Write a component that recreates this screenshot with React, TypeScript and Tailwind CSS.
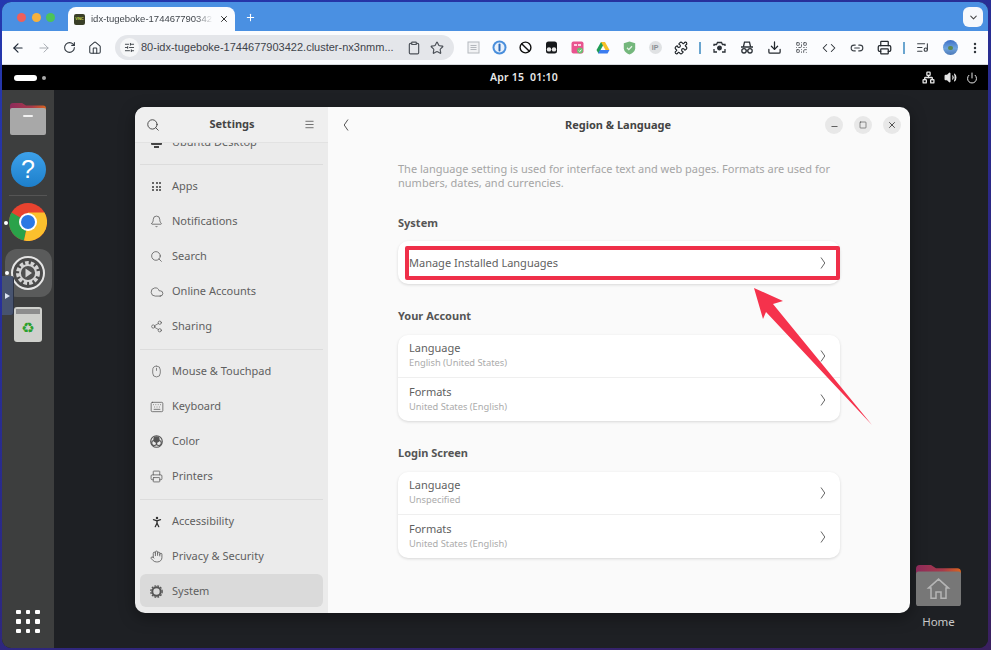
import React from "react";
import {
  ArrowLeft, ArrowRight, RotateCw, Home, Star, Clipboard, Ban, Puzzle, Download, QrCode, Code, Link2, Printer, ListMusic,
  EllipsisVertical, ChevronDown, X, Plus, Search, Menu, Bell, Cloud, Share2, Mouse, Keyboard, PersonStanding, Hand, Minus, Square, Volume2, Power, Network, SlidersHorizontal,
} from "lucide-react";

const FONT = "font-['Noto_Sans','Open_Sans',sans-serif]";

function Cell({ children, w = "w-[26px]" }: { children: React.ReactNode; w?: string }) {
  return <div className={`${w} h-full flex items-center justify-center shrink-0`}>{children}</div>;
}

const W2 = "w-[27.5px]";

function Toolbar() {
  return (
    <div className="h-[34px] bg-[#fbfcfe] flex items-center shrink-0 pl-[3px] border-b border-[#d5d8dc]">
      <div className="w-[26px] flex justify-center"><ArrowLeft size={14} strokeWidth={2} className="text-[#1f2937]" /></div>
      <div className="w-[25px] flex justify-center"><ArrowRight size={14} strokeWidth={1.6} className="text-[#a3a8ae]" /></div>
      <div className="w-[26px] flex justify-center"><RotateCw size={13} strokeWidth={2} className="text-[#333a42]" /></div>
      <div className="w-[26px] flex justify-center"><Home size={14} strokeWidth={1.8} className="text-[#333a42]" /></div>
      <div className="ml-[7px] w-[339px] h-[25px] rounded-full bg-[#e4e6ea] flex items-center pl-[5px] pr-[10px]">
        <div className="w-[19px] h-[19px] rounded-full bg-[#f6f7f8] flex items-center justify-center shrink-0">
          <SlidersHorizontal size={11} className="text-[#3a3f45]" />
        </div>
        <span className="ml-[2px] text-[11px] text-[#3f444a] whitespace-nowrap font-['Liberation_Sans',sans-serif] flex-1">80-idx-tugeboke-1744677903422.cluster-nx3nmm...</span>
        <Clipboard size={14} className="text-[#4c5158] mr-[9px]" />
        <Star size={14} className="text-[#4c5158]" />
      </div>
      <div className="ml-[6px] flex h-full items-center">
        <Cell>
          <svg width="13" height="13" viewBox="0 0 13 13"><rect x="1" y="1" width="11" height="11" fill="#f1f2f4" stroke="#b4b8bd" /><path d="M3.5 4.5h6M3.5 6.5h6M3.5 8.5h6" stroke="#b4b8bd" /></svg>
        </Cell>
        <Cell>
          <svg width="15" height="15" viewBox="0 0 15 15"><circle cx="7.5" cy="7.5" r="7" fill="#4a8fdc" /><circle cx="7.5" cy="7.5" r="5" fill="#e9f1fb" /><rect x="6.5" y="3.5" width="2" height="8" rx="1" fill="#2d6bb8" /></svg>
        </Cell>
        <Cell><Ban size={13} strokeWidth={2.6} className="text-[#111]" /></Cell>
        <Cell>
          <svg width="13" height="13" viewBox="0 0 13 13"><path d="M1 3a2.5 2.5 0 0 1 2.5-2.5h6A2.5 2.5 0 0 1 12 3v7a2.5 2.5 0 0 1-2.5 2.5h-6A2.5 2.5 0 0 1 1 10z" fill="#16181b" /><circle cx="4" cy="8.4" r="2.2" fill="#e9e9e9" /><circle cx="9" cy="8.4" r="2.2" fill="#e9e9e9" /></svg>
        </Cell>
        <Cell>
          <svg width="13" height="13" viewBox="0 0 13 13"><rect width="12" height="12" x=".5" y=".5" rx="2" fill="#e9538f" /><rect x="3" y="3" width="3" height="2" fill="#fbd3e3" /><rect x="7" y="3" width="3" height="2" fill="#fbd3e3" /><circle cx="9" cy="9.5" r="3" fill="#6cc070" /><path d="M7.8 9.5l1 1 1.5-1.8" stroke="#fff" fill="none" /></svg>
        </Cell>
        <Cell>
          <svg width="14" height="13" viewBox="0 0 14 13"><path d="M5 1h4l-4.5 8L2.5 12.5.5 9z" fill="#1f9d55" /><path d="M9 1l4.5 8h-4L5 1z" fill="#f6bf26" /><path d="M4 9h9.5l-2 3.5H2z" fill="#3b7cf0" /></svg>
        </Cell>
        <Cell>
          <svg width="13" height="14" viewBox="0 0 13 14"><path d="M.8 2.2L6.5.5l5.7 1.7v5c0 3-2.700 5.200-5.700 6.300C3.500 12.400.8 10.200.8 7.200z" fill="#74b77c" /><path d="M4 6.800l1.800 1.800 3.200-3.400" stroke="#e6f3e7" strokeWidth="1.300" fill="none" /></svg>
        </Cell>
        <Cell>
          <div className="w-[13px] h-[13px] rounded-full bg-[#e0e2e4] text-[7px] leading-[13px] text-center font-bold text-[#8a8e93] font-['Liberation_Sans',sans-serif]">IP</div>
        </Cell>
        <Cell><Puzzle size={14} strokeWidth={1.9} className="text-[#1c2126]" /></Cell>
        <div className="w-[2px] h-[12px] bg-[#6aa5cf] ml-[5px] mr-[4.250px] shrink-0" />
        <Cell w={W2}>
          <svg width="13" height="13" viewBox="0 0 13 13" fill="none" stroke="#2b3036" strokeWidth="1.300"><path d="M1 5V3.500h2.500L4.500 1.500h4l1 2H12V5M1 8v3h3M12 8v3H9" /><circle cx="6.500" cy="7" r="1.800" fill="#2b3036" /></svg>
        </Cell>
        <Cell w={W2}>
          <svg width="14" height="13" viewBox="0 0 14 13" fill="none" stroke="#2b3036" strokeWidth="1.300"><path d="M3.500 5.500l1-4.300h5l1 4.300M1 6h12" /><circle cx="4" cy="9.800" r="2.200" /><circle cx="10" cy="9.800" r="2.200" /><path d="M6.200 9.800h1.600" /></svg>
        </Cell>
        <Cell w={W2}><Download size={15} strokeWidth={2} className="text-[#24292e]" /></Cell>
        <Cell w={W2}><QrCode size={13} strokeWidth={1.6} className="text-[#4a4f55]" /></Cell>
        <Cell w={W2}><Code size={14} strokeWidth={1.8} className="text-[#2b3036]" /></Cell>
        <Cell w={W2}><Link2 size={14} strokeWidth={1.9} className="text-[#3a3f45]" /></Cell>
        <Cell w={W2}><Printer size={15} strokeWidth={2} className="text-[#24292e]" /></Cell>
        <div className="w-[2px] h-[12px] bg-[#6aa5cf] ml-[5.250px] mr-[3px] shrink-0" />
        <Cell w="w-[28px]"><ListMusic size={13} strokeWidth={2} className="text-[#3a3f45]" /></Cell>
        <Cell w="w-[28px]">
          <div className="w-[15px] h-[15px] rounded-full bg-[linear-gradient(180deg,#3c6fc6_0%,#6fa4dd_55%,#4c79b8_100%)] flex items-center justify-center">
            <div className="w-[5px] h-[4px] rounded-full bg-[#5c8a50]" />
          </div>
        </Cell>
        <Cell w="w-[22px]"><EllipsisVertical size={14} strokeWidth={2.2} className="text-[#33383e]" /></Cell>
      </div>
    </div>
  );
}

function TabBar() {
  return (
    <div className="h-[29px] bg-[#4a90e2] flex items-end shrink-0 pl-[15px] pr-[5px] relative">
      <div className="flex items-center gap-[5.500px] h-full w-[51px] pt-[1px]">
        <div className="w-[9px] h-[9px] rounded-full bg-[#ee5f5b]" />
        <div className="w-[9px] h-[9px] rounded-full bg-[#f5b13d]" />
        <div className="w-[9px] h-[9px] rounded-full bg-[#4cc35a]" />
      </div>
      <div className="w-[167px] h-[24px] bg-[#fbfcfe] rounded-t-[8px] flex items-center pl-[6px] pr-[6px]">
        <div className="w-[11px] h-[11px] rounded-[2px] bg-[#3a3f28] flex items-center justify-center text-[4px] font-bold text-[#c8d84a] font-['Liberation_Sans',sans-serif] shrink-0">VNC</div>
        <div className="ml-[6px] w-[122px] whitespace-nowrap text-[9.500px] text-[#41464c] font-['Liberation_Sans',sans-serif] [mask-image:linear-gradient(90deg,#000_86%,transparent)]">idx-tugeboke-174467790342</div>
        <X size={10} strokeWidth={2.4} className="ml-[6px] text-[#333] shrink-0" />
      </div>
      <div className="ml-[10px] h-full flex items-center pt-[1px]"><Plus size={11} strokeWidth={2.2} className="text-white" /></div>
      <div className="ml-auto mb-[4px] w-[20px] h-[20px] rounded-[6px] bg-[#f6f8fc] flex items-center justify-center">
        <ChevronDown size={11} strokeWidth={2.2} className="text-[#444]" />
      </div>
    </div>
  );
}

function TopBar() {
  return (
    <div className="h-[25px] bg-black flex items-center relative shrink-0 pl-[12px] pr-[10px]">
      <div className="w-[23px] h-[6px] rounded-full bg-white" />
      <div className="w-[4px] h-[4px] rounded-full bg-[#aaa] ml-[5px]" />
      <div className={`flex-1 text-center text-[10.500px] font-semibold text-[#e8e8e8] pl-[80px] tracking-[0.2px] ${FONT}`}>Apr 15&nbsp; 01:10</div>
      <div className="flex items-center gap-[9px] text-[#e5e5e5]">
        <Network size={13} strokeWidth={2.4} />
        <Volume2 size={13} fill="currentColor" />
        <Power size={12} strokeWidth={2} />
      </div>
    </div>
  );
}

function Folder({ large }: { large?: boolean }) {
  return (
    <svg width={large ? 45 : 36} height={large ? 41 : 32} viewBox="0 0 36 32" preserveAspectRatio="none">
      <defs>
        <linearGradient id="fold" x1="0" x2="1" y1="0" y2="0"><stop offset="0" stopColor="#8c2a5a" /><stop offset="0.6" stopColor="#a83a4a" /><stop offset="1" stopColor="#d9641f" /></linearGradient>
      </defs>
      <path d="M0 3a3 3 0 0 1 3-3h9l4 2.500h17a3 3 0 0 1 3 3V13H0z" fill="url(#fold)" />
      <path d="M0 7a2 2 0 0 1 2-2h32a2 2 0 0 1 2 2v23a2 2 0 0 1-2 2H2a2 2 0 0 1-2-2z" fill={large ? "#777777" : "#a8a8a8"} />
      {large ? (
        <path d="M18 11l-8 7h2v8h4v-5h4v5h4v-8h2z" fill="none" stroke="#b5b5b5" strokeWidth="1.200" />
      ) : (
        <rect x="13" y="12" width="10" height="2" fill="#f2f2f2" rx="1" />
      )}
    </svg>
  );
}

function Dock() {
  return (
    <div className="w-[52px] bg-[#3d3e3e] flex flex-col items-center shrink-0 relative pt-[13px]">
      <Folder />
      <div className="mt-[17px] w-[35px] h-[35px] rounded-full bg-[linear-gradient(180deg,#3da1ea,#1d7fcb)] flex items-center justify-center text-white text-[25px] leading-none font-['Liberation_Sans',sans-serif]">?</div>
      <div className="mt-[8px] w-[38px] h-px bg-[#555]" />
      <div className="mt-[7px]">
        <svg width="38" height="38" viewBox="0 0 38 38">
          <circle cx="19" cy="19" r="19" fill="#e8432f" />
          <path d="M19 19L2.500 9.500A19 19 0 0 0 15 37.600z" fill="#2aa24a" />
          <path d="M19 19l-4 18.600A19 19 0 0 0 35.500 9.500H19z" fill="#fbc02d" />
          <circle cx="19" cy="19" r="9" fill="#fff" />
          <circle cx="19" cy="19" r="7" fill="#2b78e4" />
        </svg>
      </div>
      <div className="mt-[8px] w-[47px] h-[48px] rounded-[12px] bg-[#5a5b5b] flex items-center justify-center">
        <svg width="36" height="36" viewBox="0 0 36 36" fill="none">
          <circle cx="18" cy="18" r="16" stroke="#e5e5e5" strokeWidth="2" fill="#4a4a4a" />
          <circle cx="18" cy="18" r="10" stroke="#d5d5d5" strokeWidth="4" strokeDasharray="3.500 2" />
          <circle cx="18" cy="18" r="8" stroke="#d5d5d5" strokeWidth="1.800" fill="#505050" />
          <path d="M15.500 13.500l6.500 4.500-6.500 4.500z" fill="#d5d5d5" />
        </svg>
      </div>
      <div className="mt-[10px] w-[28px] h-[35px] rounded-[3px] bg-[#cfd0cc] flex flex-col items-center pt-[2px]">
        <div className="w-[24px] h-[5px] bg-[#8d8d8d]" />
        <div className="mt-[7px] text-[#2ca02c] text-[15px] leading-none font-['DejaVu_Sans',sans-serif]">♻</div>
      </div>
      <div className="mt-auto mb-[15px] grid grid-cols-3 gap-[5px]">
        {Array.from({ length: 9 }).map((_, i) => <div key={i} className="w-[4.500px] h-[4.500px] bg-white rounded-[1px]" />)}
      </div>
      <div className="absolute left-[2px] top-[131px] w-[4px] h-[4px] rounded-full bg-white" />
      <div className="absolute left-[3px] top-[181px] w-[4px] h-[4px] rounded-full bg-white" />
      <div className="absolute left-0 top-[186px] w-[12px] h-[39px] rounded-r-[3px] bg-[#47536f] flex items-center justify-center border-r border-[#2b3243]">
        <svg width="5" height="6" viewBox="0 0 5 6"><path d="M0 0l5 3-5 3z" fill="#dbe3f2" /></svg>
      </div>
    </div>
  );
}

function NavRow({ icon, label, selected }: { icon: React.ReactNode; label: string; selected?: boolean }) {
  return (
    <div className={`h-[33px] mb-[2px] mx-[5px] flex items-center rounded-[6px] pl-[9.500px] pt-[2px] text-[11px] text-[#5f5f5f] ${selected ? "bg-[#dadada]" : ""}`}>
      <div className="w-[14px] flex justify-center shrink-0 text-[#555]">{icon}</div>
      <span className="ml-[8.500px] whitespace-nowrap">{label}</span>
    </div>
  );
}

function NavDivider({ first }: { first?: boolean }) {
  return <div className={`h-px mx-[5px] mb-[4px] bg-[#dcdcdc] ${first ? "mt-[6px]" : "mt-[7px]"}`} />;
}

function AppsIcon() {
  return (
    <div className="grid grid-cols-3 gap-[1.500px]">
      {Array.from({ length: 9 }).map((_, i) => <div key={i} className="w-[2px] h-[2px] bg-[#666]" />)}
    </div>
  );
}

function Sidebar() {
  return (
    <div className={`w-[193px] bg-[#ebebeb] flex flex-col shrink-0 ${FONT}`}>
      <div className="h-[36px] flex items-center justify-between pl-[11px] pr-[13px] bg-[#efefef] border-b border-[#e2e2e2] shrink-0 relative z-10">
        <Search size={14} strokeWidth={1.6} className="text-[#444]" />
        <span className="text-[11px] font-bold text-[#444]">Settings</span>
        <Menu size={11} strokeWidth={1.6} className="text-[#444]" />
      </div>
      <div className="flex-1 overflow-hidden">
        <div className="-mt-[18px]">
          <NavRow icon={<svg width="13" height="12" viewBox="0 0 13 12"><rect x="1" y="1" width="11" height="7" rx="1" fill="#444" /><rect x="4" y="9" width="5" height="2" fill="#444" /></svg>} label="Ubuntu Desktop" />
          <NavDivider first />
          <NavRow icon={<AppsIcon />} label="Apps" />
          <NavRow icon={<Bell size={13} strokeWidth={1.4} />} label="Notifications" />
          <NavRow icon={<Search size={13} strokeWidth={1.4} />} label="Search" />
          <NavRow icon={<Cloud size={14} strokeWidth={1.3} />} label="Online Accounts" />
          <NavRow icon={<Share2 size={13} strokeWidth={1.3} />} label="Sharing" />
          <NavDivider />
          <NavRow icon={<Mouse size={13} strokeWidth={1.3} />} label="Mouse & Touchpad" />
          <NavRow icon={<Keyboard size={14} strokeWidth={1.3} />} label="Keyboard" />
          <NavRow icon={
            <svg width="13" height="13" viewBox="0 0 13 13" fill="none" stroke="#555" strokeWidth="1.100"><circle cx="6.500" cy="6.500" r="5.800" /><circle cx="6.500" cy="4.500" r="2.600" fill="#555" /><circle cx="4.200" cy="8" r="2.500" /><circle cx="8.800" cy="8" r="2.500" /></svg>
          } label="Color" />
          <NavRow icon={<Printer size={13} strokeWidth={1.4} />} label="Printers" />
          <NavDivider />
          <NavRow icon={<PersonStanding size={14} strokeWidth={2.2} className="text-[#333]" />} label="Accessibility" />
          <NavRow icon={<Hand size={13} strokeWidth={1.5} />} label="Privacy & Security" />
          <NavRow selected icon={
            <svg width="13" height="13" viewBox="0 0 13 13" fill="none" stroke="#555"><circle cx="6.500" cy="6.500" r="4.200" strokeWidth="2" /><circle cx="6.500" cy="6.500" r="5.700" strokeWidth="1.300" strokeDasharray="1.800 1.200" /></svg>
          } label="System" />
        </div>
      </div>
    </div>
  );
}

function Chevron() {
  return (
    <svg width="6" height="14" viewBox="0 0 6 14" fill="none" stroke="#666" strokeWidth="1" className="shrink-0">
      <path d="M1 1.500l3.800 5.500L1 12.500" />
    </svg>
  );
}

function Row({ title, sub, top }: { title: string; sub: string; top?: boolean }) {
  return (
    <div className={`h-[43px] flex items-center justify-between pl-[11px] pr-[14px] ${top ? "border-b border-[#efefef]" : ""}`}>
      <div className="flex flex-col pb-[2px]">
        <span className="text-[11px] leading-[15px] text-[#5f5f5f]">{title}</span>
        <span className="text-[9.300px] leading-[15px] text-[#ababab]">{sub}</span>
      </div>
      <Chevron />
    </div>
  );
}

function Card({ children }: { children: React.ReactNode }) {
  return <div className="bg-white rounded-[10px] shadow-[0_1px_3px_rgba(0,0,0,0.14)]">{children}</div>;
}

function Heading({ children, className }: { children: React.ReactNode; className?: string }) {
  return <div className={`text-[11px] leading-[16px] font-bold text-[#555] ${className ?? ""}`}>{children}</div>;
}

function Content() {
  return (
    <div className={`flex-1 bg-[#fafafa] flex flex-col relative ${FONT}`}>
      <div className="h-[36px] flex items-center shrink-0 relative pl-[15px]">
        <svg width="6" height="14" viewBox="0 0 6 14" fill="none" stroke="#555" strokeWidth="1"><path d="M5 1.500L1.200 7 5 12.500" /></svg>
        <div className="absolute inset-x-0 pr-[2px] text-center text-[11px] font-bold text-[#444]">Region &amp; Language</div>
        <div className="ml-auto flex items-center gap-[11px] pr-[9px]">
          <div className="w-[18px] h-[18px] rounded-full bg-[#e8e8e8] flex items-center justify-center"><Minus size={9} strokeWidth={2} className="text-[#333] mt-[3px]" /></div>
          <div className="w-[18px] h-[18px] rounded-full bg-[#e8e8e8] flex items-center justify-center"><Square size={8} strokeWidth={1.6} className="text-[#333]" /></div>
          <div className="w-[18px] h-[18px] rounded-full bg-[#e8e8e8] flex items-center justify-center"><X size={10} strokeWidth={2} className="text-[#333]" /></div>
        </div>
      </div>
      <div className="px-[70px] pt-[19px]">
        <p className="text-[11px] leading-[14px] text-[#a5a5a5]">The language setting is used for interface text and web pages. Formats are used for numbers, dates, and currencies.</p>
        <Heading className="mt-[25px]">System</Heading>
        <div className="mt-[10px] relative">
          <Card>
            <div className="h-[43px]" />
          </Card>
          <div className="absolute left-[7px] right-0 top-[5px] h-[34px] border-[4px] border-[#ef2f49] rounded-[2px] flex items-center justify-between pr-[10px]">
            <span className="text-[11px] text-[#5f5f5f] whitespace-nowrap">Manage Installed Languages</span>
            <Chevron />
          </div>
        </div>
        <Heading className="mt-[24px]">Your Account</Heading>
        <div className="mt-[11px]">
          <Card>
            <Row top title="Language" sub="English (United States)" />
            <Row title="Formats" sub="United States (English)" />
          </Card>
        </div>
        <Heading className="mt-[24px]">Login Screen</Heading>
        <div className="mt-[11px]">
          <Card>
            <Row top title="Language" sub="Unspecified" />
            <Row title="Formats" sub="United States (English)" />
          </Card>
        </div>
      </div>
    </div>
  );
}

export default function App() {
  return (
    <div className="w-[991px] h-[650px] overflow-hidden relative bg-[linear-gradient(160deg,#2438b0_0%,#2a2a8a_50%,#3a2060_100%)] p-[2px] pr-[3px] pb-[2px]">
      <div className="w-full h-full rounded-[9px] overflow-hidden flex flex-col bg-[#1e2024]">
        <TabBar />
        <Toolbar />
        <TopBar />
        <div className="flex-1 flex min-h-0 relative">
          <Dock />
          <div className="flex-1 bg-[#1e2024] relative pl-[81px] pt-[17px]">
            <div className="w-[775px] h-[506px] rounded-[10px] overflow-hidden flex shadow-[0_4px_16px_rgba(0,0,0,0.4)]">
              <Sidebar />
              <Content />
            </div>
            <div className="absolute left-[862px] top-[475px] flex flex-col items-center w-[45px]">
              <Folder large />
              <div className={`mt-[7px] text-[11.500px] text-[#c8c8c8] ${FONT}`}>Home</div>
            </div>
          </div>
        </div>
      </div>
      <svg className="absolute left-[745px] top-[280px]" width="135" height="150" viewBox="745 280 135 150">
        <polygon points="754,288 783,301 773,304 872,425 766,312 763,319" fill="#f5324c" />
      </svg>
    </div>
  );
}
